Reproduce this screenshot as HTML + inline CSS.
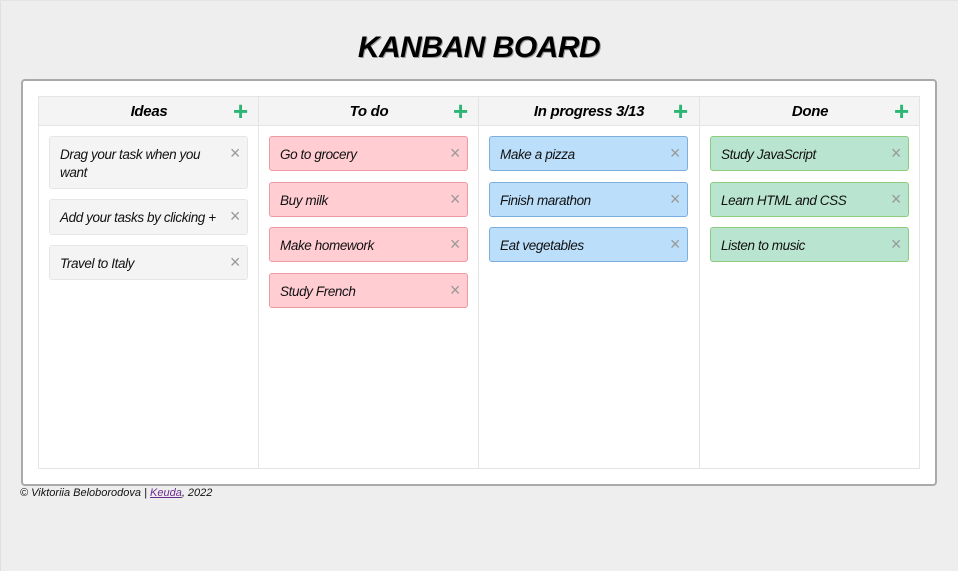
<!DOCTYPE html>
<html><head><style>
*{box-sizing:border-box;margin:0;padding:0}
body{width:958px;height:571px;background:#eee;font-family:"Liberation Sans",sans-serif;position:relative;overflow:hidden}
.lb{position:absolute;left:0;top:0;width:1px;height:571px;background:#e0e0e0}
.tb{position:absolute;left:0;top:0;width:958px;height:1px;background:#e4e4e4}
h1{position:absolute;left:0;width:958px;top:31px;text-align:center;font-size:30px;font-weight:bold;font-style:italic;letter-spacing:-0.5px;color:#000;text-shadow:1px 1px 0 #999}
.board{position:absolute;left:21px;top:79px;width:916px;height:407px;background:#fff;border:2px solid #aaa;border-radius:4px}
.tbl{position:absolute;left:38px;top:96px;width:882px;height:373px;border:1px solid #e4e4e4}
.hdr{position:absolute;left:0;top:0;width:880px;height:29px;background:#f4f4f4;border-bottom:1px solid #e4e4e4}
.col{position:absolute;top:0;height:371px;border-left:1px solid #e4e4e4}
.ht{position:absolute;top:6px;width:220px;text-align:center;font-weight:bold;font-style:italic;font-size:15px;letter-spacing:-0.3px}
.plus{position:absolute;top:4px;color:#2bb673;font-size:26px;font-weight:bold;line-height:20px}
.c{position:absolute;width:199px;border:1px solid;border-radius:3px;font-style:italic;font-size:13.5px;letter-spacing:-0.4px;padding:9px 24px 8px 10px;line-height:18px;color:#111;white-space:nowrap;overflow:hidden}
.c.w{white-space:normal}
.c::after{content:"\00d7";position:absolute;right:7px;top:7px;color:#999;font-size:18px;font-style:normal}
.g{background:#f4f4f4;border-color:#e6e6e6}
.r{background:#ffcdd2;border-color:#ee9aa2}
.b{background:#bbdefb;border-color:#7eaedc}
.gr{background:#b9e4d0;border-color:#8ccc7c}
.foot{position:absolute;left:20px;top:487px;font-size:11px;font-style:italic;color:#111}
.foot a{color:#6a2c91}
</style></head><body>
<div class="lb"></div><div class="tb"></div>
<h1>KANBAN BOARD</h1>
<div class="board"></div>
<div class="tbl">
<div class="hdr"></div>
<div class="col" style="left:219px"></div>
<div class="col" style="left:439px"></div>
<div class="col" style="left:660px"></div>
<div class="ht" style="left:0">Ideas</div>
<div class="ht" style="left:220px">To do</div>
<div class="ht" style="left:440px">In progress 3/13</div>
<div class="ht" style="left:661px">Done</div>
<div class="plus" style="left:194px">+</div>
<div class="plus" style="left:414px">+</div>
<div class="plus" style="left:634px">+</div>
<div class="plus" style="left:855px">+</div>
</div>
<div class="c g w" style="left:49px;top:136px;height:53px">Drag your task when you want</div>
<div class="c g" style="left:49px;top:199px;height:36px;padding-right:4px">Add your tasks by clicking +</div>
<div class="c g" style="left:49px;top:245px;height:35px">Travel to Italy</div>
<div class="c r" style="left:269px;top:136px;height:35px">Go to grocery</div>
<div class="c r" style="left:269px;top:182px;height:35px">Buy milk</div>
<div class="c r" style="left:269px;top:227px;height:35px">Make homework</div>
<div class="c r" style="left:269px;top:273px;height:35px">Study French</div>
<div class="c b" style="left:489px;top:136px;height:35px">Make a pizza</div>
<div class="c b" style="left:489px;top:182px;height:35px">Finish marathon</div>
<div class="c b" style="left:489px;top:227px;height:35px">Eat vegetables</div>
<div class="c gr" style="left:710px;top:136px;height:35px">Study JavaScript</div>
<div class="c gr" style="left:710px;top:182px;height:35px">Learn HTML and CSS</div>
<div class="c gr" style="left:710px;top:227px;height:35px">Listen to music</div>
<div class="foot">© Viktoriia Beloborodova | <a href="#">Keuda</a>, 2022</div>
</body></html>
